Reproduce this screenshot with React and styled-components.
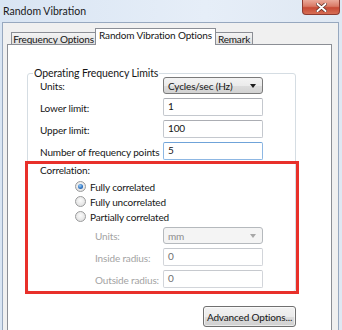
import React from "react";
import styled, { createGlobalStyle, css } from "styled-components";

const GlobalStyle = createGlobalStyle`
  html, body { margin: 0; padding: 0; }
  body {
    width: 342px;
    height: 330px;
    overflow: hidden;
    font-family: Lato, "Liberation Sans", sans-serif;
    font-size: 10px;
    letter-spacing: -0.15px;
    color: #161616;
    background: #ffffff;
  }
`;

const Window = styled.div`
  width: 342px;
  height: 330px;
  display: flex;
  flex-direction: column;
  overflow: hidden;
  background: linear-gradient(to right, #d9e5f3, #e6eef8 60%, #dfe8f3);
`;

const TitleBar = styled.div`
  height: 22px;
  display: flex;
  align-items: flex-start;
  flex-shrink: 0;
`;

const Title = styled.div`
  margin-left: 3px;
  line-height: 23px;
  font-size: 10.5px;
  letter-spacing: 0;
  color: #1a1a1a;
`;

const CloseButton = styled.div`
  margin-left: auto;
  margin-right: 2px;
  width: 38px;
  height: 15px;
  box-sizing: border-box;
  border: 1px solid #8d3b31;
  border-top: none;
  border-radius: 0 0 4px 4px;
  background: linear-gradient(to bottom, #eaa99a 0%, #d97a66 45%, #c74a35 55%, #d66e55 100%);
  display: flex;
  align-items: center;
  justify-content: center;
`;

const Frame = styled.div`
  flex: 1;
  margin: 0 3px 0 2px;
  border: 1px solid #97a8bf;
  border-bottom: none;
  background: #f0f0f0;
  display: flex;
  flex-direction: column;
  padding: 0 6px 0 4px;
  min-height: 0;
`;

const TabStrip = styled.div`
  display: flex;
  align-items: flex-end;
  padding: 5px 0 0 4px;
  margin-bottom: -1px;
  flex-shrink: 0;
`;

const Tab = styled.div`
  box-sizing: border-box;
  width: ${(p) => p.$w}px;
  border: 1px solid #8b8e95;
  border-bottom: none;
  display: flex;
  align-items: center;
  justify-content: center;
  white-space: nowrap;
  ${(p) =>
    p.$active
      ? css`
          height: 17px;
          background: #ffffff;
          position: relative;
          z-index: 2;
          padding-bottom: 4px;
        `
      : css`
          height: 13px;
          background: linear-gradient(to bottom, #f4f4f4, #e8e8e8 50%, #dedede);
          padding-bottom: 1px;
        `}
  & + & {
    margin-left: -1px;
  }
`;

const Panel = styled.div`
  flex: 1;
  background: #ffffff;
  border: 1px solid #8b8e95;
  border-bottom: none;
  position: relative;
  z-index: 1;
  display: flex;
  flex-direction: column;
`;

const GroupBox = styled.div`
  margin: 28px 35px 0 19px;
  border: 1px solid #d5dde3;
  border-radius: 3px;
  display: flex;
  flex-direction: column;
`;

const Legend = styled.div`
  align-self: flex-start;
  margin: -8px 0 0 5px;
  padding: 0 1px;
  height: 14px;
  line-height: 14px;
  background: #ffffff;
  font-size: 10.5px;
  letter-spacing: -0.1px;
`;

const Rows = styled.div`
  display: flex;
  flex-direction: column;
  gap: 4px;
  margin-top: -3px;
`;

const FieldRow = styled.div`
  display: flex;
  align-items: center;
  padding-left: ${(p) => p.$indent || 12}px;
`;

const Label = styled.div`
  width: ${(p) => p.$w || 123}px;
  color: ${(p) => (p.$disabled ? "#a3a3a3" : "#161616")};
  white-space: nowrap;
  padding-top: 1px;
`;

const TextBox = styled.div`
  box-sizing: border-box;
  width: 100px;
  height: 18px;
  border: 1px solid ${(p) => (p.$focused ? "#8db7e3" : p.$disabled ? "#d2d5da" : "#c4c8ce")};
  border-top-color: ${(p) => (p.$focused ? "#6fa3d9" : p.$disabled ? "#c6c9ce" : "#abadb3")};
  border-radius: 2px;
  background: #ffffff;
  padding-left: 4px;
  line-height: 15px;
  color: ${(p) => (p.$disabled ? "#6f6f6f" : "#161616")};
`;

const Combo = styled.div`
  box-sizing: border-box;
  width: 100px;
  height: 17px;
  border: 1px solid ${(p) => (p.$disabled ? "#b5b9bd" : "#7a7a7a")};
  border-radius: 3px;
  background: ${(p) =>
    p.$disabled
      ? "#f4f4f4"
      : "linear-gradient(to bottom, #f3f3f3, #ebebeb 50%, #dddddd 51%, #d2d2d2)"};
  display: flex;
  align-items: center;
  padding: 0 6px 0 4px;
  color: ${(p) => (p.$disabled ? "#8c8c8c" : "#161616")};
`;

const ComboText = styled.span`
  flex: 1;
`;

const Arrow = styled.span`
  width: 0;
  height: 0;
  border-left: 3.5px solid transparent;
  border-right: 3.5px solid transparent;
  border-top: 4px solid ${(p) => (p.$disabled ? "#a7a7a7" : "#1c1c1c")};
`;

const Highlight = styled.div`
  margin: 1px -4px -3px -3px;
  border: 3px solid #e8302a;
  padding: 0 0 3px 0;
  display: flex;
  flex-direction: column;
`;

const SectionLabel = styled.div`
  padding-left: 12px;
  line-height: 13px;
  height: 13px;
`;

const RadioGroup = styled.div`
  display: flex;
  flex-direction: column;
  margin-top: 2px;
  padding-left: 47px;
`;

const RadioRow = styled.div`
  height: 15px;
  display: flex;
  align-items: center;
  gap: 4px;
`;

const RadioCircle = styled.span`
  box-sizing: border-box;
  width: 11px;
  height: 11px;
  border-radius: 50%;
  border: 1px solid #9a9b9c;
  background: radial-gradient(circle at 50% 40%, #fbfbfb, #d9d9d9);
  display: flex;
  align-items: center;
  justify-content: center;
  &::after {
    content: "";
    width: 5px;
    height: 5px;
    border-radius: 50%;
    display: ${(p) => (p.$checked ? "block" : "none")};
    background: radial-gradient(circle at 40% 35%, #9fd0f5, #2a6fc0 60%, #1b4f93);
  }
`;

const SubRows = styled.div`
  display: flex;
  flex-direction: column;
  gap: 4px;
  margin-top: 3px;
`;

const Footer = styled.div`
  display: flex;
  justify-content: flex-end;
  margin: 14px 35px 0 0;
`;

const Button = styled.div`
  box-sizing: border-box;
  width: 93px;
  height: 21px;
  border: 1px solid #707070;
  border-radius: 3px;
  background: linear-gradient(to bottom, #f2f2f2, #ebebeb 50%, #dddddd 51%, #cfcfcf);
  box-shadow: inset 0 0 0 1px rgba(255, 255, 255, 0.6);
  display: flex;
  align-items: center;
  justify-content: center;
  white-space: nowrap;
`;

export default function App() {
  return (
    <>
      <GlobalStyle />
      <Window>
        <TitleBar>
          <Title>Random Vibration</Title>
          <CloseButton>
            <svg width="11" height="9" viewBox="0 0 11 9">
              <path
                d="M1.5 1 L9.5 8 M9.5 1 L1.5 8"
                stroke="#5a2a22"
                strokeWidth="3.4"
                strokeLinecap="round"
              />
              <path
                d="M1.5 1 L9.5 8 M9.5 1 L1.5 8"
                stroke="#ffffff"
                strokeWidth="2"
                strokeLinecap="round"
              />
            </svg>
          </CloseButton>
        </TitleBar>
        <Frame>
          <TabStrip>
            <Tab $w={85}>Frequency Options</Tab>
            <Tab $w={121} $active>
              Random Vibration Options
            </Tab>
            <Tab $w={38}>Remark</Tab>
          </TabStrip>
          <Panel>
            <GroupBox>
              <Legend>Operating Frequency Limits</Legend>
              <Rows>
                <FieldRow>
                  <Label>Units:</Label>
                  <Combo>
                    <ComboText>Cycles/sec (Hz)</ComboText>
                    <Arrow />
                  </Combo>
                </FieldRow>
                <FieldRow>
                  <Label>Lower limit:</Label>
                  <TextBox>1</TextBox>
                </FieldRow>
                <FieldRow>
                  <Label>Upper limit:</Label>
                  <TextBox>100</TextBox>
                </FieldRow>
                <FieldRow>
                  <Label>Number of frequency points</Label>
                  <TextBox $focused>5</TextBox>
                </FieldRow>
              </Rows>
              <Highlight>
                <SectionLabel>Correlation:</SectionLabel>
                <RadioGroup>
                  <RadioRow>
                    <RadioCircle $checked />
                    Fully correlated
                  </RadioRow>
                  <RadioRow>
                    <RadioCircle />
                    Fully uncorrelated
                  </RadioRow>
                  <RadioRow>
                    <RadioCircle />
                    Partially correlated
                  </RadioRow>
                </RadioGroup>
                <SubRows>
                  <FieldRow $indent={67}>
                    <Label $w={68} $disabled>
                      Units:
                    </Label>
                    <Combo $disabled>
                      <ComboText>mm</ComboText>
                      <Arrow $disabled />
                    </Combo>
                  </FieldRow>
                  <FieldRow $indent={67}>
                    <Label $w={68} $disabled>
                      Inside radius:
                    </Label>
                    <TextBox $disabled>0</TextBox>
                  </FieldRow>
                  <FieldRow $indent={67}>
                    <Label $w={68} $disabled>
                      Outside radius:
                    </Label>
                    <TextBox $disabled>0</TextBox>
                  </FieldRow>
                </SubRows>
              </Highlight>
            </GroupBox>
            <Footer>
              <Button>Advanced Options...</Button>
            </Footer>
          </Panel>
        </Frame>
      </Window>
    </>
  );
}
